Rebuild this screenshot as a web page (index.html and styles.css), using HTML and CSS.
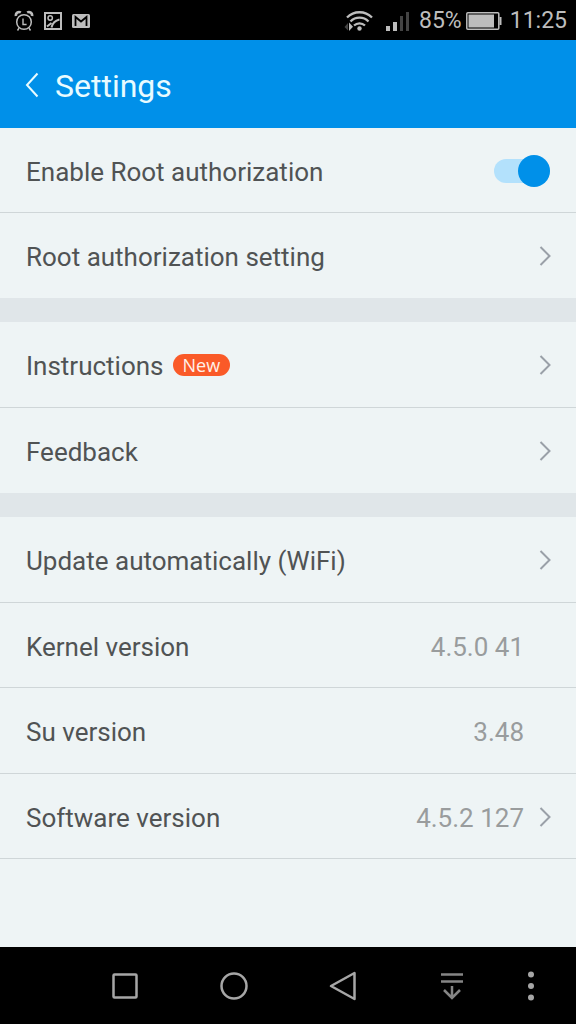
FILE: index.html
```html
<!DOCTYPE html>
<html lang="en">
<head>
<meta charset="utf-8">
<meta name="viewport" content="width=device-width, initial-scale=1">
<title>Settings</title>
<link rel="stylesheet" href="styles.css">
</head>
<body>
<svg class="defs" width="0" height="0" aria-hidden="true">
  <symbol id="chevron" viewBox="0 0 12 22"><path d="M1.500 2 10.500 11 1.500 20" fill="none" stroke="currentColor" stroke-width="2"/></symbol>
</svg>
<div class="status">
  <div class="status-icons">
    <svg width="20" height="22" viewBox="0 0 20 22" fill="none" stroke="currentColor">
      <circle cx="10" cy="12" r="7.300" stroke-width="1.500"/>
      <path d="M2 6a3.200 3.200 0 0 1 4.800-3.500M18 6a3.200 3.200 0 0 0-4.800-3.500" stroke-width="2.600"/>
      <path d="M5 18.200 3.500 20.500M15 18.200l1.500 2.300" stroke-width="1.500"/>
      <path d="M9 8.500v6h3.600" stroke-width="1.400"/>
    </svg>
    <svg width="18" height="18" viewBox="0 0 18 18" fill="none" stroke="currentColor">
      <rect x="1" y="1" width="16" height="16" stroke-width="2"/>
      <circle cx="6.200" cy="6" r="2.200" stroke-width="1.500"/>
      <path d="M3 14.500 7.500 11" stroke-width="2"/>
      <path d="M7.500 15.500C8.500 11 11 8.500 15.500 7.500" stroke-width="2"/>
    </svg>
    <svg width="18" height="14" viewBox="0 0 18 14">
      <rect width="18" height="14" rx="1.500" fill="currentColor"/>
      <path d="M3.500 12V3L9 7.500 14.500 3v9" fill="none" stroke="#000" stroke-width="1.800"/>
    </svg>
  </div>
  <div class="status-info">
    <svg width="30" height="22" viewBox="0 0 30 22" fill="none" stroke="currentColor" stroke-width="2.300">
      <path d="M3 7.500a17.500 17.500 0 0 1 25 0M6.500 11.500a12.500 12.500 0 0 1 18 0M10 15.500a8 8 0 0 1 11 0"/>
      <circle cx="15.500" cy="18.500" r="2.200" fill="currentColor" stroke="none"/>
      <path d="M5 12.500v8.500l4-4.200Z" fill="currentColor" stroke="none"/>
      <path d="M4 13v7.500L.5 17Z" fill="#444" stroke="none"/>
    </svg>
    <svg class="signal" width="24" height="22" viewBox="0 0 24 22">
      <path d="M0 16h4v5H0zM7 12h4v9H7z" fill="currentColor"/>
      <path d="M14 6h3v15h-3zM20 2h3v19h-3z" fill="#444"/>
    </svg>
    <span>85%</span>
    <svg class="battery" width="36" height="18" viewBox="0 0 36 18" fill="none" stroke="currentColor">
      <rect x=".8" y=".8" width="32" height="16.400" rx="1" stroke-width="1.500"/>
      <path d="M2.500 2.500h25.500v13H2.500z" fill="currentColor" stroke="none"/>
      <path d="M34.500 5v8" stroke-width="2"/>
    </svg>
    <span>11:25</span>
  </div>
</div>
<header class="header">
  <button class="back" aria-label="Back">
    <svg width="14" height="26" viewBox="0 0 14 26"><path d="M12.500 1.500 2 13l10.500 11.500" fill="none" stroke="currentColor" stroke-width="2"/></svg>
  </button>
  <h1 class="title">Settings</h1>
</header>
<main class="main">
  <section class="group">
    <label class="row"><span class="label">Enable Root authorization</span><input class="switch" type="checkbox" role="switch" checked></label>
    <button class="row"><span class="label">Root authorization setting</span><svg class="chevron"><use href="#chevron"/></svg></button>
  </section>
  <section class="group">
    <button class="row"><span class="label">Instructions</span><span class="badge">New</span><svg class="chevron"><use href="#chevron"/></svg></button>
    <button class="row"><span class="label">Feedback</span><svg class="chevron"><use href="#chevron"/></svg></button>
  </section>
  <section class="group group-versions">
    <button class="row"><span class="label">Update automatically (WiFi)</span><svg class="chevron"><use href="#chevron"/></svg></button>
    <div class="row"><span class="label">Kernel version</span><span class="value">4.5.0 41</span></div>
    <div class="row"><span class="label">Su version</span><span class="value">3.48</span></div>
    <button class="row"><span class="label">Software version</span><span class="value">4.5.2 127</span><svg class="chevron"><use href="#chevron"/></svg></button>
  </section>
</main>
<nav class="nav">
  <button aria-label="Recent apps"><svg width="30" height="30" viewBox="0 0 30 30"><rect x="3.500" y="3.500" width="23" height="23" rx="1"/></svg></button>
  <button aria-label="Home"><svg width="30" height="30" viewBox="0 0 30 30"><circle cx="15" cy="15" r="12.500"/></svg></button>
  <button aria-label="Back"><svg width="30" height="30" viewBox="0 0 30 30"><path d="M26.500 2v26L3 15Z" stroke-linejoin="round"/></svg></button>
  <button class="dim" aria-label="Open notifications"><svg width="30" height="30" viewBox="0 0 30 30"><path d="M4 3.500h22M4 10.500h22M15 15v12M7 19l8 8 8-8"/></svg></button>
  <button aria-label="More"><svg width="30" height="30" viewBox="0 0 30 30"><g fill="currentColor" stroke="none"><circle cx="15" cy="3.500" r="3"/><circle cx="15" cy="15" r="3"/><circle cx="15" cy="26.500" r="3"/></g></svg></button>
</nav>
</body>
</html>
```

FILE: styles.css
```css
* {
  box-sizing: border-box;
}

body {
  margin: 0;
  min-height: 100vh;
  display: flex;
  flex-direction: column;
  background: #eef4f5;
  font-family: Roboto, "Liberation Sans", sans-serif;
}

button {
  margin: 0;
  padding: 0;
  border: 0;
  background: none;
  color: inherit;
  font: inherit;
}

svg {
  display: block;
  flex: none;
}

.defs {
  position: absolute;
}

.status {
  display: flex;
  align-items: center;
  justify-content: space-between;
  height: 40px;
  padding: 2px 9px 0 14px;
  background: #000;
  color: #bdbdbd;
  font-size: 23px;
  line-height: 28px;
}

.status-icons,
.status-info {
  display: flex;
  align-items: center;
}

.status-icons {
  gap: 10px;
}

.signal {
  margin: 0 9px 0 12px;
}

.battery {
  margin: 0 8px 0 4px;
}

.header {
  display: flex;
  align-items: center;
  gap: 16px;
  height: 88px;
  padding: 2px 25px 0;
  background: #0090e9;
  color: #e8fbff;
}

.title {
  margin: 0;
  font-size: 32px;
  font-weight: 400;
  line-height: 40px;
}

.main {
  flex: 1;
}

.group {
  display: grid;
  grid-auto-rows: 1fr;
  min-height: 170px;
}

.group + .group {
  border-top: 24px solid #e0e6e9;
  min-height: 195px;
}

.main .group-versions {
  min-height: 366px;
}

.row {
  display: flex;
  align-items: center;
  width: 100%;
  padding: 2px 25px 0 26px;
  border-bottom: 1px solid #cfd6d8;
  color: #505354;
  font-size: 26px;
  line-height: 32px;
  text-align: left;
}

.label,
.value,
.title {
  padding-top: 2px;
}

.group:not(.group-versions) .row:last-child {
  border-bottom-color: transparent;
}

.chevron {
  width: 12px;
  height: 22px;
  margin-left: auto;
  color: #9aa0a8;
}

.value {
  margin-left: auto;
  color: #999c9d;
}

.value:last-child {
  margin-right: 27px;
}

.value + .chevron {
  margin-left: 15px;
}

.badge {
  margin-left: 9px;
  padding: 0 10px;
  border-radius: 11px;
  background: #fa5a28;
  color: #fff0e8;
  font-family: "Open Sans", "Noto Sans", sans-serif;
  font-size: 18px;
  line-height: 22px;
}

.switch {
  appearance: none;
  display: flex;
  align-items: center;
  width: 56px;
  height: 24px;
  margin: 0 1px 0 auto;
  border-radius: 12px;
  background: #cfd6d8;
}

.switch::before {
  content: "";
  flex: none;
  width: 32px;
  height: 32px;
  border-radius: 50%;
  background: #0090e9;
}

.switch:checked {
  justify-content: flex-end;
  background: #b3e1fc;
}

.nav {
  display: grid;
  grid-template-columns: 109fr 109fr 109fr 109fr 50fr;
  height: 77px;
  padding: 0 20px 0 71px;
  background: #000;
  color: #a6a6a6;
}

.nav button {
  display: grid;
  place-items: center;
}

.nav svg {
  fill: none;
  stroke: currentColor;
  stroke-width: 2.5px;
}

.nav .dim {
  color: #858585;
}
```
